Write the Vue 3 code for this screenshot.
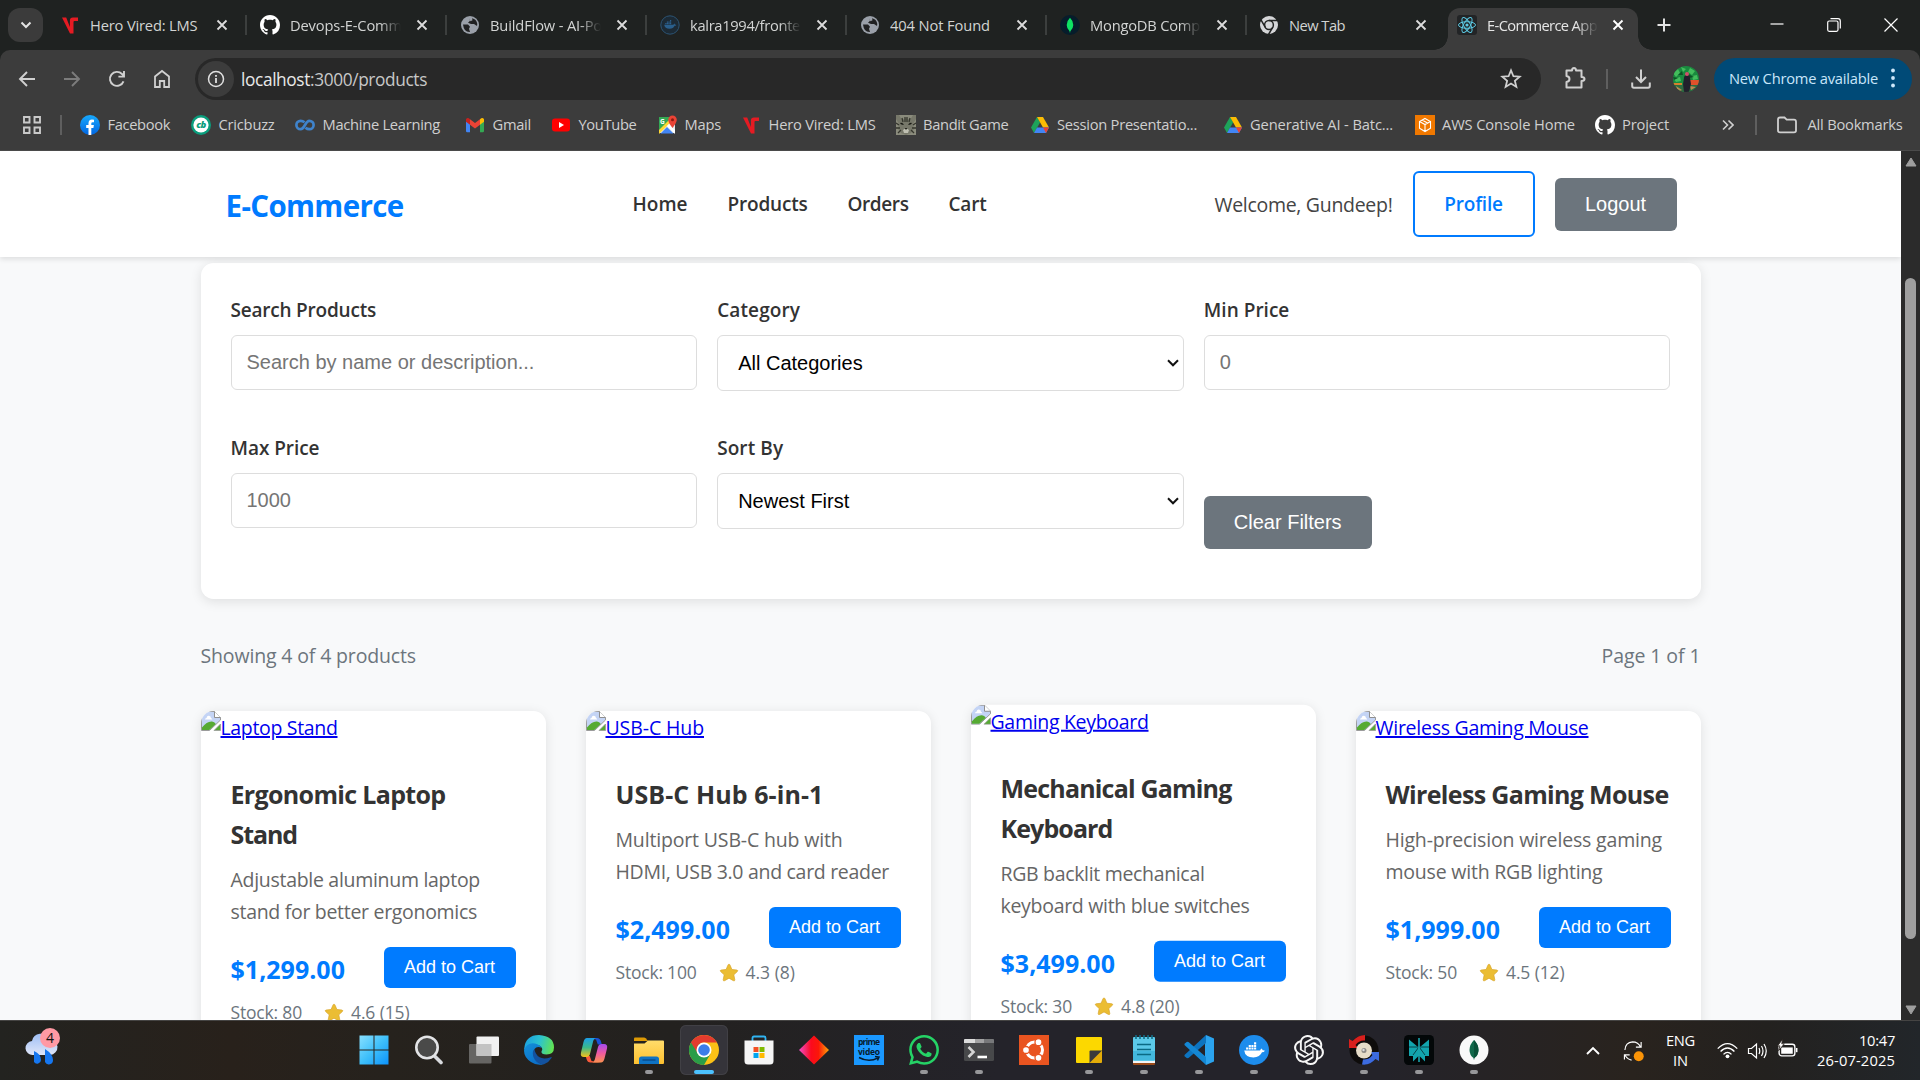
<script setup>
const vFit = {
  mounted(el, { value }) {
    if (!value) return
    const width = el.getBoundingClientRect().width
    el.style.letterSpacing = `${(value - width) / el.textContent.length}px`
  },
}

const v = `<svg viewBox="0 0 20 20"><path d="M2 2.500h4.200l3.700 9.500V5.500q0-3 3-3H18V6h-3.500q-1 0-1 1v11.500H10Z" fill="#e51b23"/></svg>`
const github = `<svg viewBox="0 0 16 16"><path fill="#fff" d="M8 0C3.58 0 0 3.58 0 8c0 3.54 2.29 6.53 5.47 7.59.4.07.55-.17.55-.38 0-.19-.01-.82-.01-1.49-2.01.37-2.53-.49-2.69-.94-.09-.23-.48-.94-.82-1.13-.28-.15-.68-.52-.01-.53.63-.01 1.08.58 1.23.82.72 1.21 1.87.87 2.33.66.07-.52.28-.87.51-1.07-1.78-.2-3.64-.89-3.64-3.95 0-.87.31-1.59.82-2.15-.08-.2-.36-1.02.08-2.12 0 0 .67-.21 2.2.82.64-.18 1.32-.27 2-.27.68 0 1.36.09 2 .27 1.53-1.04 2.2-.82 2.2-.82.44 1.1.16 1.92.08 2.12.51.56.82 1.27.82 2.15 0 3.07-1.87 3.75-3.65 3.95.29.25.54.73.54 1.48 0 1.07-.01 1.93-.01 2.2 0 .21.15.46.55.38A8.013 8.013 0 0016 8c0-4.42-3.58-8-8-8z"/></svg>`
const globe = `<svg viewBox="0 0 20 20"><circle cx="10" cy="10" r="9" fill="#9aa0a9"/><path d="M3 9.500h5l2 2.200-1 2 1 3.300q-6 .5-7-7.500ZM9 3.200l1 2.500-2 2 3 1.300h3l3 2 .3-2Q16.500 4 12 3.200l.5 2-2 1Z" fill="#202122"/></svg>`
const whale = `<path d="M3.500 12.500h17.200q.5-1.800 2-2.200l.8 2q1.600-.2 2.500.5-1 1.700-3.200 1.700-2.200 5.500-9.300 5.500-9 0-10-7.500Z"/><path d="M5.500 9.200h2.300v2.300H5.500zM8.400 9.200h2.300v2.300H8.400zM11.300 9.200h2.300v2.300h-2.300zM14.200 9.200h2.300v2.300h-2.300zM8.400 6.400h2.300v2.300H8.400zM11.300 6.400h2.300v2.300h-2.300zM14.200 6.400h2.300v2.300h-2.300zM14.200 3.600h2.300v2.300h-2.300z"/>`
const dockerDim = `<svg viewBox="0 0 20 20"><circle cx="10" cy="10" r="9.200" fill="#1c2a35" stroke="#2c5474" stroke-width="1"/><g fill="#2a5f8c" transform="translate(2.300 3) scale(.54)">${whale}</g></svg>`
const mongoDark = `<svg viewBox="0 0 20 20"><circle cx="10" cy="10" r="10" fill="#061d2b"/><path d="M10 2.800q3.300 3.200 3.300 7.200 0 3.700-3 6.200l-.1 1.300h-.5l-.1-1.300Q6.700 13.700 6.700 10q0-4 3.300-7.200Z" fill="#0ee264"/></svg>`
const chromeGrey = `<svg viewBox="0 0 20 20"><circle cx="10" cy="10" r="9" fill="#d5d6d8"/><g fill="none" stroke="#222423" stroke-width="1.500"><circle cx="10" cy="10" r="4.400"/><path d="M10 5.600h8.500M6.200 12.200 2 4.900M13.800 12.200l-4.300 7.300"/></g></svg>`
const react = `<svg viewBox="0 0 20 20"><rect width="20" height="20" rx="3" fill="#222426"/><g fill="none" stroke="#5cc9e3" stroke-width="1"><ellipse cx="10" cy="10" rx="8.500" ry="3.300"/><ellipse cx="10" cy="10" rx="8.500" ry="3.300" transform="rotate(60 10 10)"/><ellipse cx="10" cy="10" rx="8.500" ry="3.300" transform="rotate(120 10 10)"/></g><circle cx="10" cy="10" r="1.600" fill="#5cc9e3"/></svg>`

const tabs = [
  { icon: v, title: 'Hero Vired: LMS', w: 107.500 },
  { icon: github, title: 'Devops-E-Comm', w: 112, fade: true },
  { icon: globe, title: 'BuildFlow - AI-Po', w: 112, fade: true },
  { icon: dockerDim, title: 'kalra1994/fronte', w: 110, fade: true },
  { icon: globe, title: '404 Not Found', w: 100 },
  { icon: mongoDark, title: 'MongoDB Comp', w: 110, fade: true },
  { icon: chromeGrey, title: 'New Tab', w: 56 },
]

const facebook = `<svg viewBox="0 0 20 20"><defs><linearGradient id="fbg" x1="0" y1="0" x2="0" y2="1"><stop offset="0" stop-color="#17a9fd"/><stop offset="1" stop-color="#0165e1"/></linearGradient></defs><circle cx="10" cy="10" r="10" fill="url(#fbg)"/><path d="M8.500 20v-7H6.200v-3h2.300V8.300q0-3.800 3.500-3.800l2 .2v2.500h-1.300q-1.400 0-1.400 1.400V10h2.600l-.5 3h-2.100v7Z" fill="#fff"/></svg>`
const cricbuzz = `<svg viewBox="0 0 20 20"><circle cx="10" cy="10" r="10" fill="#0a9e7d"/><circle cx="10" cy="10" r="7.600" fill="#fff"/><text x="10" y="13.300" text-anchor="middle" font-family="Open Sans, sans-serif" font-size="9.500" font-weight="800" font-style="italic" letter-spacing="-.6" fill="#0a9e7d">cb</text></svg>`
const coursera = `<svg viewBox="0 0 20 20"><g fill="none" stroke="#3f83cb" stroke-width="2.700"><path d="M9.500 7.300Q7.800 5.800 5.600 5.800a4.200 4.200 0 0 0 0 8.400c4.300 0 4.500-8.400 8.800-8.400a4.200 4.200 0 0 1 0 8.400q-2.200 0-3.900-1.500"/></g></svg>`
const gmail = `<svg viewBox="0 0 20 20"><path d="M1 5v11q0 1.200 1.200 1.200H5V8Z" fill="#4285f4"/><path d="M15 8v9.200h2.800Q19 17.200 19 16V5Z" fill="#34a853"/><path d="M5 4.300v5.500l5 3.800 5-3.800V4.300l-5 3.800Z" fill="#ea4335"/><path d="M1 5v1.800l4 3V4.300Q2.500 2 1 4.200Z" fill="#c5221f"/><path d="M19 5v1.800l-4 3V4.300Q17.500 2 19 4.200Z" fill="#fbbc04"/></svg>`
const youtube = `<svg viewBox="0 0 20 20"><rect x="1" y="3.500" width="18" height="13" rx="3" fill="#f00"/><path d="m8 7 5 3-5 3Z" fill="#fff"/></svg>`
const maps = `<svg viewBox="0 0 20 20"><path d="M2 2h16v16H2Z" fill="#34a853"/><path d="M2 18 18 2v16Z" fill="#e8eaec"/><path d="M3.500 18.500 10 12l6.500 6.500Z" fill="#4285f4"/><path d="M2 15 12 5l2 2L2 19Z" fill="#fdd835"/><path d="m12 9 6 6v4l-8-8Z" fill="#fff"/><path d="M15.500 13Q11.200 7.500 11.200 4.800a4.300 4.300 0 0 1 8.600 0q0 2.700-4.300 8.200Z" fill="#ea4335"/><circle cx="15.500" cy="4.800" r="1.500" fill="#8c1a10"/><text x="3" y="9" font-size="6.500" font-weight="700" font-family="Open Sans, sans-serif" fill="#fff">G</text></svg>`
const cat = `<svg viewBox="0 0 20 20"><rect width="20" height="20" fill="#8a8b7c"/><path d="M0 0h3l3 5 4-2 4 2 3-5h3v4l-3 5 1 5-3 4-5 2-5-2-3-4 1-5-3-5Z" fill="#77786a"/><path d="M6 3l1 4M9 2v5M11 2v5M14 3l-1 4M0 8l3 2M20 8l-3 2M0 13h4M20 13h-4M2 18l3-3M18 18l-3-3" stroke="#35362d" stroke-width="1.300"/><path d="M4 8q2-1 4 1.500-3 1-4-1.500Zm12 0q-2-1-4 1.500 3 1 4-1.500ZM8.800 13h2.400L10 15Z" fill="#171812"/><path d="M7 15l3-2 3 2-1 3H8Z" fill="#c0c0b2"/><path d="M8.800 13h2.400L10 15Z" fill="#171812"/></svg>`
const drive = `<svg viewBox="0 0 20 20"><path d="M7 2 1 12.500 4 18l6.200-10.700Z" fill="#1da35a"/><path d="M7 2h6l6 10.500h-6Z" fill="#fbbc04"/><path d="M7 12.500h12L16 18H4Z" fill="#4285f4"/><path d="M13 12.500h6L16 18Z" fill="#ea4335"/></svg>`
const aws = `<svg viewBox="0 0 20 20"><rect width="20" height="20" fill="#f07800"/><path d="m10 3.500 5.500 3v6.800L10 16.500l-5.500-3.200V6.500Zm-5.500 3L10 9.500l5.500-3M10 9.500v7M7 5l5.500 3" fill="none" stroke="#fff" stroke-width="1.100"/></svg>`

const bookmarks = [
  { icon: facebook, title: 'Facebook', w: 62.500, slot: 111 },
  { icon: cricbuzz, title: 'Cricbuzz', w: 56, slot: 104 },
  { icon: coursera, title: 'Machine Learning', w: 117.500, slot: 170 },
  { icon: gmail, title: 'Gmail', w: 38.500, slot: 86 },
  { icon: youtube, title: 'YouTube', w: 58, slot: 106 },
  { icon: maps, title: 'Maps', w: 36.500, slot: 84 },
  { icon: v, title: 'Hero Vired: LMS', w: 107, slot: 154.500 },
  { icon: cat, title: 'Bandit Game', w: 85.500, slot: 134 },
  { icon: drive, title: 'Session Presentatio...', w: 140, slot: 193 },
  { icon: drive, title: 'Generative AI - Batc...', w: 143, slot: 192 },
  { icon: aws, title: 'AWS Console Home', w: 133, slot: 180 },
  { icon: github, title: 'Project', w: 47, slot: 123 },
]

const nav = [
  { label: 'Home', w: 55 },
  { label: 'Products', w: 80 },
  { label: 'Orders', w: 61 },
  { label: 'Cart', w: 38 },
]

const fields = [
  { label: 'Search Products', w: 145.500, placeholder: 'Search by name or description...' },
  { label: 'Category', w: 83, select: 'All Categories' },
  { label: 'Min Price', w: 85.500, placeholder: '0' },
  { label: 'Max Price', w: 89, placeholder: '1000' },
  { label: 'Sort By', w: 66, select: 'Newest First' },
]

const products = [
  {
    alt: 'Laptop Stand', altW: 117,
    name: [['Ergonomic Laptop', 215], ['Stand', 66.500]],
    desc: [['Adjustable aluminum laptop', 249.500], ['stand for better ergonomics', 246.500]],
    price: '$1,299.00', stock: 'Stock: 80', stockW: 71.500, rating: '4.6 (15)', ratingW: 58.500,
  },
  {
    alt: 'USB-C Hub', altW: 98.500,
    name: [['USB-C Hub 6-in-1', 208]],
    desc: [['Multiport USB-C hub with', 227], ['HDMI, USB 3.0 and card reader', 273.500]],
    price: '$2,499.00', stock: 'Stock: 100', stockW: 81, rating: '4.3 (8)', ratingW: 49.500,
  },
  {
    alt: 'Gaming Keyboard', altW: 158,
    name: [['Mechanical Gaming', 231], ['Keyboard', 112]],
    desc: [['RGB backlit mechanical', 204], ['keyboard with blue switches', 249]],
    price: '$3,499.00', stock: 'Stock: 30', stockW: 71.500, rating: '4.8 (20)', ratingW: 58.500, hover: true,
  },
  {
    alt: 'Wireless Gaming Mouse', altW: 213,
    name: [['Wireless Gaming Mouse', 283]],
    desc: [['High-precision wireless gaming', 276.500], ['mouse with RGB lighting', 217]],
    price: '$1,999.00', stock: 'Stock: 50', stockW: 71.500, rating: '4.5 (12)', ratingW: 58.500,
  },
]

const apps = [
  { name: 'start', svg: `<svg viewBox="0 0 30 30"><defs><linearGradient id="win" gradientUnits="userSpaceOnUse" x1="0" y1="0" x2="30" y2="30"><stop offset="0" stop-color="#8be1ff"/><stop offset=".5" stop-color="#3fc0fb"/><stop offset="1" stop-color="#0a91fb"/></linearGradient></defs><path d="M.5.500h14v14H.5zM15.500.500h14v14h-14zM.5 15.500h14v14H.5zM15.500 15.500h14v14h-14z" fill="url(#win)"/></svg>` },
  { name: 'search', svg: `<svg viewBox="0 0 30 30"><path d="m19.500 20 7.500 7.500" stroke="#d9dbde" stroke-width="3.600" stroke-linecap="round"/><circle cx="13" cy="12.500" r="10.700" fill="#4a4a49" stroke="#e3e4e6" stroke-width="2.600"/></svg>` },
  { name: 'taskview', svg: `<svg viewBox="0 0 30 30"><rect y="9" width="22.500" height="19.500" rx="1" fill="#666563"/><rect x="7.500" y="1.500" width="22.500" height="19.500" rx="1" fill="#f1f1f1"/><path d="M7.500 9h15v12h-15z" fill="#c3c3c3"/></svg>` },
  { name: 'edge', svg: `<svg viewBox="0 0 30 30"><defs><linearGradient id="e1" x1="0" y1=".3" x2="1" y2=".5"><stop offset="0" stop-color="#1b9fe0"/><stop offset=".5" stop-color="#2cc3d0"/><stop offset="1" stop-color="#62e352"/></linearGradient><linearGradient id="e2" x1="0" y1="0" x2=".6" y2="1"><stop offset="0" stop-color="#1390da"/><stop offset="1" stop-color="#0c6fc8"/></linearGradient></defs><path d="M.2 13.500Q1.500 0 15 0q15 1 15 12.500 0 7-7.500 7-5.500 0-5-3.300 1.300-1.400.5-3.200Q16.500 10 12 10 4 10 .2 15Z" fill="url(#e1)"/><path d="M.1 15Q3 7 11 8.500q5 1 7 4.500-5-2.500-7.500 1-3 5 1.500 11 3 3.500 7 4.400Q13 31 7 27-.5 22 .1 15Z" fill="url(#e2)"/><path d="M10.300 14Q7 19 11 25q4 5 9 4.300 5-2 7.500-6.300.6-1.300-.7-.8-10.500 3.500-14.500-3.200-1.500-2.500-2-5Z" fill="#13529f"/></svg>` },
  { name: 'copilot', svg: `<svg viewBox="0 0 30 30"><defs><linearGradient id="c1" x1="0" y1="0" x2="0" y2="1"><stop offset="0" stop-color="#1b9de8"/><stop offset=".5" stop-color="#3bb98a"/><stop offset="1" stop-color="#f6c21a"/></linearGradient><linearGradient id="c2" x1="0" y1="0" x2="0" y2="1"><stop offset="0" stop-color="#a34af0"/><stop offset=".5" stop-color="#ef5aa0"/><stop offset="1" stop-color="#fb9150"/></linearGradient></defs><path d="M7.500 3H18q3 0 4 3.500l.8 3h-4L17 4.500Z" fill="#1a51d6"/><path d="M22 27.500H11.500q-3 0-4-3.500l-.8-3h4l1.800 5Z" fill="#fa5a3c"/><path d="M8 3h9q-2 0-2.800 3L11 19q-.8 3-3.500 3H5q-4 0-3-4.500L4.500 7Q5.500 3 8 3Z" fill="url(#c1)"/><path d="M22 27.500h-9q2 0 2.800-3l3.200-12.500q.8-3 3.500-3H25q4 0 3 4.500l-2.500 10q-1 4-3.500 4Z" fill="url(#c2)"/></svg>` },
  { name: 'explorer', run: true, svg: `<svg viewBox="0 0 30 30"><defs><linearGradient id="fo" x1="0" y1="0" x2="0" y2="1"><stop offset="0" stop-color="#ffdc6b"/><stop offset="1" stop-color="#fdc02f"/></linearGradient></defs><path d="M0 3.500q0-1 1-1h9q1 0 1.700.8L14 6H0Z" fill="#dd9a05"/><path d="M0 8.500h10.500L14 5.500h15q1 0 1 1V28q0 1-1 1H0Z" fill="url(#fo)"/><path d="M5 29v-5q0-2.500 2.500-2.500h15Q25 21.500 25 24v5Z" fill="#0f73c4"/><path d="M8.500 25h13" stroke="#09498a" stroke-width="1.400"/></svg>` },
  { name: 'chrome', active: true, svg: `<svg viewBox="0 0 30 30"><circle cx="15" cy="15" r="15" fill="#fbc116"/><path d="M2 7.500A15 15 0 0 0 15 30l6.500-11.200L15 15 8 5Z" fill="#2a9d48"/><path d="M2 7.500A15 15 0 0 1 15 0a15 15 0 0 1 13 7.500H15q-5 0-6.500 4.300L8.500 18Z" fill="#e33b2e"/><circle cx="15" cy="15" r="7.500" fill="#fff"/><circle cx="15" cy="15" r="5.800" fill="#3b7de9"/></svg>` },
  { name: 'store', svg: `<svg viewBox="0 0 30 30"><path d="M8.500 7V3q0-1.500 1.500-1.500h10q1.500 0 1.500 1.500v4" fill="none" stroke="#30b4f2" stroke-width="1.800"/><path d="M.5 5.500h29V26q0 3.500-3.500 3.500H4Q.5 29.500.5 26Z" fill="#f5f5f5"/><path d="M9.500 12h5v5h-5z" fill="#f25022"/><path d="M15.500 12h5v5h-5z" fill="#7fba00"/><path d="M9.500 18h5v5h-5z" fill="#00a4ef"/><path d="M15.500 18h5v5h-5z" fill="#ffb900"/></svg>` },
  { name: 'diamond', svg: `<svg viewBox="0 0 30 30"><defs><linearGradient id="di"><stop offset="0" stop-color="#f04fc9"/><stop offset=".4" stop-color="#fb0a1e"/><stop offset=".65" stop-color="#fb1708"/><stop offset="1" stop-color="#fda50a"/></linearGradient></defs><path d="m15 .5 15 14.500-15 14.500L0 15Z" fill="url(#di)"/></svg>` },
  { name: 'prime', svg: `<svg viewBox="0 0 30 30"><rect width="30" height="30" fill="#1a98ff"/><g font-family="Open Sans, sans-serif" font-weight="700" font-size="8.500" fill="#061b2e" text-anchor="middle"><text x="15" y="10" textLength="22">prime</text><text x="15" y="19.500" textLength="22">video</text></g><path d="M5 22.500q10 5.500 19 .3M21 21.500l4 .5-1.500 3.500" stroke="#061b2e" stroke-width="1.500" fill="none"/></svg>` },
  { name: 'whatsapp', run: true, svg: `<svg viewBox="0 0 24 24"><path fill="#25d366" d="M17.472 14.382c-.297-.149-1.758-.867-2.030-.967-.273-.099-.471-.148-.67.150-.197.297-.767.966-.940 1.164-.173.199-.347.223-.644.075-.297-.150-1.255-.463-2.390-1.475-.883-.788-1.480-1.761-1.653-2.059-.173-.297-.018-.458.130-.606.134-.133.298-.347.446-.520.149-.174.198-.298.298-.497.099-.198.050-.371-.025-.520-.075-.149-.669-1.612-.916-2.207-.242-.579-.487-.500-.669-.510-.173-.008-.371-.010-.570-.010-.198 0-.520.074-.792.372-.272.297-1.040 1.016-1.040 2.479 0 1.462 1.065 2.875 1.213 3.074.149.198 2.096 3.200 5.077 4.487.709.306 1.262.489 1.694.625.712.227 1.360.195 1.871.118.571-.085 1.758-.719 2.006-1.413.248-.694.248-1.289.173-1.413-.074-.124-.272-.198-.570-.347m-5.421 7.403h-.004a9.870 9.870 0 0 1-5.031-1.378l-.361-.214-3.741.982.998-3.648-.235-.374a9.860 9.860 0 0 1-1.510-5.260c.001-5.450 4.436-9.884 9.888-9.884 2.640 0 5.122 1.030 6.988 2.898a9.825 9.825 0 0 1 2.893 6.994c-.003 5.450-4.437 9.884-9.885 9.884m8.413-18.297A11.815 11.815 0 0 0 12.050 0C5.495 0 .160 5.335.157 11.892c0 2.096.547 4.142 1.588 5.945L.057 24l6.305-1.654a11.882 11.882 0 0 0 5.683 1.448h.005c6.554 0 11.890-5.335 11.893-11.893a11.821 11.821 0 0 0-3.480-8.413z"/></svg>` },
  { name: 'terminal', run: true, svg: `<svg viewBox="0 0 30 30"><rect y="4" width="30" height="22" rx="1.500" fill="#47484a"/><path d="M1 4h10v4H0V5q0-1 1-1Z" fill="#dcdcdc"/><path d="M11 4h9v4h-9z" fill="#a2a2a3"/><path d="M20 4h9q1 0 1 1v3H20z" fill="#77787a"/><path d="m4.500 12 5 5-5 5" fill="none" stroke="#d4d4d4" stroke-width="2.600"/><path d="M13.500 22H23" stroke="#fff" stroke-width="2.600"/></svg>` },
  { name: 'ubuntu', svg: `<svg viewBox="0 0 30 30"><rect width="30" height="30" fill="#e95420"/><circle cx="15.500" cy="15" r="8" fill="none" stroke="#fff" stroke-width="3"/><g fill="#fff" stroke="#e95420" stroke-width="1.300"><circle cx="7" cy="15" r="3.500"/><circle cx="19.500" cy="7.200" r="3.500"/><circle cx="19.500" cy="22.800" r="3.500"/></g></svg>` },
  { name: 'notes', run: true, svg: `<svg viewBox="0 0 30 30"><path d="M2 3q0-1 1-1h24q1 0 1 1v13L16 28H3q-1 0-1-1Z" fill="#fcd800"/><path d="M28 15.500V27q0 1-1 1H15.500V16.500q0-1 1-1Z" fill="#3a3a3c"/><path d="M28 15.500 15.500 28h11.500q1 0 1-1Z" fill="#e4ac08"/></svg>` },
  { name: 'notepad', run: true, svg: `<svg viewBox="0 0 30 30"><rect x="4" y="24" width="22" height="6" rx="1" fill="#9a4a18"/><path d="M4 24h22v4H4z" fill="#f4f4f4"/><rect x="4" y="2" width="22" height="24" rx="1" fill="#5cc9e8"/><path d="M4 16h22v9H4z" fill="#43b8dd"/><path d="M8 9.500h14M8 14.500h14M8 19.500h14" stroke="#0b6a84" stroke-width="1.500"/><path d="M7 0v4M11 0v4M15 0v4M19 0v4M23 0v4" stroke="#126d85" stroke-width="1.600"/></svg>` },
  { name: 'vscode', run: true, svg: `<svg viewBox="0 0 30 30"><path d="m22 0 8 3.500v23L22 30l-1-7V7Z" fill="#2ba3ee"/><path d="M22 0v8L4.500 23 3 23.200.5 21.300V20Z" fill="#0d74c0"/><path d="M22 30v-8L4.500 7 3 6.800.5 8.700V10Z" fill="#1487d4"/></svg>` },
  { name: 'docker', run: true, svg: `<svg viewBox="0 0 30 30"><circle cx="15" cy="15" r="15" fill="#1d8cec"/><g fill="#fff" transform="translate(2 4) scale(.92)">${whale}</g></svg>` },
  { name: 'chatgpt', run: true, svg: `<svg viewBox="0 0 24 24"><path fill="#f6f6f6" d="M22.2819 9.8211a5.9847 5.9847 0 0 0-.5157-4.9108 6.0462 6.0462 0 0 0-6.5098-2.9A6.0651 6.0651 0 0 0 4.9807 4.1818a5.9847 5.9847 0 0 0-3.9977 2.9 6.0462 6.0462 0 0 0 .7427 7.0966 5.98 5.98 0 0 0 .511 4.9107 6.051 6.051 0 0 0 6.5146 2.9001A5.9847 5.9847 0 0 0 13.2599 24a6.0557 6.0557 0 0 0 5.7718-4.2058 5.9894 5.9894 0 0 0 3.9977-2.9001 6.0557 6.0557 0 0 0-.7475-7.0729zm-9.022 12.6081a4.4755 4.4755 0 0 1-2.8764-1.0408l.1419-.0804 4.7783-2.7582a.7948.7948 0 0 0 .3927-.6813v-6.7369l2.02 1.1686a.071.071 0 0 1 .038.052v5.5826a4.504 4.504 0 0 1-4.4945 4.4944zm-9.6607-4.1254a4.4708 4.4708 0 0 1-.5346-3.0137l.142.0852 4.783 2.7582a.7712.7712 0 0 0 .7806 0l5.8428-3.3685v2.3324a.0804.0804 0 0 1-.0332.0615L9.74 19.9502a4.4992 4.4992 0 0 1-6.1408-1.6464zM2.3408 7.8956a4.485 4.485 0 0 1 2.3655-1.9728V11.6a.7664.7664 0 0 0 .3879.6765l5.8144 3.3543-2.0201 1.1685a.0757.0757 0 0 1-.071 0l-4.8303-2.7865A4.504 4.504 0 0 1 2.3408 7.872zm16.5963 3.8558L13.1038 8.364 15.1192 7.2a.0757.0757 0 0 1 .071 0l4.8303 2.7913a4.4944 4.4944 0 0 1-.6765 8.1042v-5.6772a.79.79 0 0 0-.407-.667zm2.0107-3.0231l-.142-.0852-4.7735-2.7818a.7759.7759 0 0 0-.7854 0L9.409 9.2297V6.8974a.0662.0662 0 0 1 .0284-.0615l4.8303-2.7866a4.4992 4.4992 0 0 1 6.6802 4.66zM8.3065 12.863l-2.02-1.1638a.0804.0804 0 0 1-.038-.0567V6.0742a4.4992 4.4992 0 0 1 7.3757-3.4537l-.142.0805L8.704 5.459a.7948.7948 0 0 0-.3927.6813zm1.0976-2.3654l2.602-1.4998 2.6069 1.4998v2.9994l-2.5974 1.4997-2.6067-1.4997Z"/></svg>` },
  { name: 'sync', run: true, svg: `<svg viewBox="0 0 30 30"><circle cx="15" cy="15" r="14.500" fill="#0e0c0b"/><path d="M0 4v9h9L6.500 10Q10 5 16 5.500V0Q9 0 3.500 6Z" fill="#d8201d"/><path d="M30 26v-9h-9l2.500 3q-3 4.500-9.500 4.500l-1 5q8 1 13.500-5.500Z" fill="#3c6be0"/><circle cx="15" cy="15.500" r="8" fill="#e6dcc8"/><circle cx="15" cy="15.500" r="2.500" fill="#8d8a86"/><circle cx="14.500" cy="15" r="1.200" fill="#dedede"/></svg>` },
  { name: 'perplexity', run: true, svg: `<svg viewBox="0 0 30 30"><rect width="30" height="30" rx="4.500" fill="#030708"/><path d="m5 4.500 9 7.500h2l9-7.500V21l-4 0v5.500L15.500 21h-1L9 26.500V21H5Z" fill="#12a5ae"/><path d="M15 3v24M5 12h20M9 20l5.500-7.500M21 20l-5.500-7.500" stroke="#06444b" stroke-width="1"/><path d="M15 3v24" stroke="#20c5cf" stroke-width="1.200"/></svg>` },
  { name: 'mongodb', run: true, svg: `<svg viewBox="0 0 30 30"><circle cx="15" cy="15" r="14.500" fill="#f9f9f9"/><path d="M15 5q4.500 4.500 4.500 10 0 5-4 8l-.2 1.500h-.6l-.2-1.500q-4-3-4-8Q10.500 9.500 15 5Z" fill="#11694b"/><path d="M15 5q4.500 4.500 4.500 10 0 5-4.500 8Z" fill="#0a5239"/></svg>` },
]
</script>

<template>
  <div class="screen">
    <header class="tabstrip">
      <button class="tab-search" aria-label="Search tabs">
        <svg viewBox="0 0 12 12" width="12" height="12"><path d="m1.500 3.500 4.500 4.500 4.500-4.500" fill="none" stroke="#e3e3e3" stroke-width="2" /></svg>
      </button>
      <div v-for="(t, i) in tabs" :key="t.title" class="tab" :class="{ last: i === tabs.length - 1 }">
        <span class="icon" v-html="t.icon"></span>
        <span class="tab-title" :class="{ fade: t.fade }"><span v-fit="t.w" class="txt">{{ t.title }}</span></span>
        <svg class="x" viewBox="0 0 12 12"><path d="m1.500 1.500 9 9m0-9-9 9" stroke="#dcdcdc" stroke-width="1.800" /></svg>
      </div>
      <div class="tab active">
        <span class="icon" v-html="react"></span>
        <span class="tab-title fade"><span v-fit="110" class="txt">E-Commerce App</span></span>
        <svg class="x" viewBox="0 0 12 12"><path d="m1.500 1.500 9 9m0-9-9 9" stroke="#fff" stroke-width="1.900" /></svg>
      </div>
      <svg class="plus" viewBox="0 0 14 14"><path d="M7 .5v13M.5 7h13" stroke="#e3e3e3" stroke-width="2" /></svg>
      <div class="window-buttons">
        <svg viewBox="0 0 14 14"><path d="M.5 6h13" stroke="#fff" stroke-width="1.200" /></svg>
        <svg viewBox="0 0 14 14"><rect x=".7" y="3" width="10.300" height="10.300" rx="1.500" fill="none" stroke="#fff" stroke-width="1.200" /><path d="M3.500.700H11Q13.300.700 13.300 3v7.500" fill="none" stroke="#fff" stroke-width="1.200" /></svg>
        <svg viewBox="0 0 14 14"><path d="m.5.500 13 13m0-13-13 13" stroke="#fff" stroke-width="1.200" /></svg>
      </div>
    </header>

    <div class="chrome">
      <div class="toolbar">
        <div class="nav-buttons">
          <svg viewBox="0 0 20 20"><path d="M18 10H3m7-7-7 7 7 7" fill="none" stroke="#d0d0d0" stroke-width="1.900" /></svg>
          <svg viewBox="0 0 20 20"><path d="M2 10h15m-7-7 7 7-7 7" fill="none" stroke="#7c7c7c" stroke-width="1.900" /></svg>
          <svg viewBox="0 0 20 20"><path d="M16.500 12.300A7 7 0 1 1 15 5l2 2.200M17 2v5.600h-5.600" fill="none" stroke="#d0d0d0" stroke-width="1.900" /></svg>
          <svg viewBox="0 0 20 20"><path d="M3 18V7.500L10 2l7 5.500V18h-4.800v-6H7.800v6Z" fill="none" stroke="#d0d0d0" stroke-width="1.800" /></svg>
        </div>
        <div class="omnibox">
          <span class="info"><svg viewBox="0 0 18 18" width="18" height="18"><circle cx="9" cy="9" r="7.500" fill="none" stroke="#e0e0e0" stroke-width="1.500" /><path d="M9 8v5M9 5v1.800" stroke="#e0e0e0" stroke-width="1.800" /></svg></span>
          <span v-fit="186" class="txt url">localhost<span class="path">:3000/products</span></span>
          <svg class="star" viewBox="0 0 20 20"><path d="m10 2.200 2.200 5.300 5.700.4-4.400 3.700 1.400 5.600-4.900-3-4.900 3 1.400-5.600L2.100 7.900l5.700-.4Z" fill="none" stroke="#d0d0d0" stroke-width="1.600" /></svg>
        </div>
        <svg class="puzzle" viewBox="0 0 22 24"><path d="M2.500 4.500H8Q8 2 10 2t2 2.500h5.500V11Q20.500 11 20.500 13t-3 2v6.500H2.500V16q3-.5 3-3t-3-3Z" fill="none" stroke="#d0d0d0" stroke-width="2" stroke-linejoin="round" /></svg>
        <i class="sep"></i>
        <svg class="download" viewBox="0 0 20 20"><path d="M10 .500v12M5 8l5 5 5-5M1.200 13.500V17q0 1.700 1.700 1.700h14.200q1.700 0 1.700-1.700v-3.500" fill="none" stroke="#d0d0d0" stroke-width="2" /></svg>
        <svg class="avatar" viewBox="0 0 26 26"><defs><clipPath id="av"><circle cx="13" cy="13" r="13" /></clipPath></defs><g clip-path="url(#av)"><path d="M0 0h26v26H0z" fill="#1a8a3f" /><path d="m0 7 5-4 2 4-4 4Zm8-6 5 2-3 3Zm9 1 5 3-3 4-4-3ZM1 13l6-2 1 4-5 1Zm18-3 5-1 1 4-5 1Z" fill="#43bd5c" /><path d="m5 9 4-4 1 4Zm9-3 3 3 4 2-5 1ZM0 11l5 1-4 2Z" fill="#0d5226" /><path d="M0 17h9v2H0z" fill="#d8802e" /><path d="M17 14h9v5h-9z" fill="#e0512b" /><path d="M0 19h26v7H0z" fill="#2e6b41" /><path d="m3 20 6 4-4 2ZM17 20l6 1-5 3Z" fill="#b98a52" /><path d="M11 12q0-3 3-3t3 3l1 6-2 8h-5l-1-8Z" fill="#22202c" /><circle cx="14" cy="8" r="2" fill="#d0506c" /></g></svg>
        <button class="update"><span v-fit="149" class="txt">New Chrome available</span><svg viewBox="0 0 4 20" width="4" height="20"><g fill="#cfe8fb"><circle cx="2" cy="2.500" r="1.900" /><circle cx="2" cy="10" r="1.900" /><circle cx="2" cy="17.500" r="1.900" /></g></svg></button>
      </div>

      <div class="bookmarks">
        <svg class="grid-icon" viewBox="0 0 18 18"><path d="M1 1h5.500v5.500H1zM11.500 1H17v5.500h-5.500zM1 11.500h5.500V17H1zM11.500 11.500H17V17h-5.500z" fill="none" stroke="#c9c9c9" stroke-width="1.900" /></svg>
        <i class="sep"></i>
        <div v-for="b in bookmarks" :key="b.title" class="bookmark" :style="{ width: b.slot + 'px' }">
          <span class="icon" v-html="b.icon"></span>
          <span v-fit="b.w" class="txt">{{ b.title }}</span>
        </div>
        <svg class="more" viewBox="0 0 12 12"><path d="m1 1.500 4.500 4.500L1 10.500m5.500-9L11 6l-4.500 4.500" fill="none" stroke="#d0d0d0" stroke-width="1.600" /></svg>
        <i class="sep second"></i>
        <svg class="folder" viewBox="0 0 20 18"><path d="M1 14.500v-11Q1 1.500 3 1.500h4.500l2.200 2.200H17q2 0 2 2v8.800q0 1.800-2 1.800H3q-2 0-2-1.800Z" fill="none" stroke="#d0d0d0" stroke-width="1.800" /></svg>
        <span v-fit="95" class="txt">All Bookmarks</span>
      </div>
    </div>

    <div class="viewport">
      <div class="page">
        <nav class="navbar">
          <div class="navbar-inner">
            <a class="brand"><span v-fit="178" class="txt">E-Commerce</span></a>
            <div class="links">
              <a v-for="n in nav" :key="n.label"><span v-fit="n.w" class="txt">{{ n.label }}</span></a>
            </div>
            <div class="user">
              <span v-fit="178" class="txt welcome">Welcome, Gundeep!</span>
              <a class="btn outline"><span v-fit="58.500" class="txt">Profile</span></a>
              <button class="btn grey logout">Logout</button>
            </div>
          </div>
        </nav>

        <main class="container">
          <section class="filters">
            <div v-for="f in fields" :key="f.label" class="field">
              <label><span v-fit="f.w" class="txt">{{ f.label }}</span></label>
              <div v-if="f.select" class="select">
                {{ f.select }}
                <svg viewBox="0 0 12 8" width="12" height="8"><path d="m1 1.300 5 5 5-5" fill="none" stroke="#111" stroke-width="2" /></svg>
              </div>
              <input v-else type="text" :placeholder="f.placeholder" />
            </div>
            <div class="field end"><button class="btn grey">Clear Filters</button></div>
          </section>

          <div class="summary">
            <span v-fit="215.500" class="txt">Showing 4 of 4 products</span>
            <span v-fit="99" class="txt">Page 1 of 1</span>
          </div>

          <section class="products">
            <article v-for="p in products" :key="p.alt" class="card" :class="{ hover: p.hover }">
              <a class="picture">
                <svg viewBox="0 0 20 20" width="20" height="20"><path d="M.5.500h13l6 6V9L8.500 19.500H.5Z" fill="#c4d4f5" stroke="#9b9b9b" /><path d="M13.500.500v6h6" fill="#fff" stroke="#8f8f8f" /><path d="M4 8.500Q4 7 5.500 7q.5-2.500 2.500-2.200 2 .3 2 2.500 1.200 0 1.200 1.200Z" fill="#fff" /><path d="M1 19v-2.500Q6 10 11 10.500q2.500.3 3.800 2.500L8.300 19Z" fill="#56aa32" /><path d="M13 19.500 19.500 13v6.500Z" fill="#56aa32" stroke="#9b9b9b" stroke-width=".8" /></svg>
                <span v-fit="p.altW" class="txt">{{ p.alt }}</span>
              </a>
              <div class="info-block">
                <h3><span v-for="l in p.name" :key="l[0]" v-fit="l[1]" class="txt">{{ l[0] }}</span></h3>
                <p><span v-for="l in p.desc" :key="l[0]" v-fit="l[1]" class="txt">{{ l[0] }}</span></p>
                <div class="buy">
                  <span v-fit="114.500" class="txt price">{{ p.price }}</span>
                  <button class="add">Add to Cart</button>
                </div>
                <div class="meta">
                  <span v-fit="p.stockW" class="txt">{{ p.stock }}</span>
                  <svg class="gold" viewBox="0 0 20 20"><path d="M10 1.200q.7 0 1.100 1l1.800 4.300 4.900.5q1.700.4.500 1.600l-3.500 3.200 1 4.900q.1 1.600-1.400 1L10 15.200l-4.400 2.500q-1.500.6-1.400-1l1-4.900-3.500-3.200Q.5 7.400 2.200 7l4.900-.5 1.800-4.300q.4-1 1.100-1Z" fill="#ebbd33" stroke="#d9a52a" stroke-width=".7" /></svg>
                  <span v-fit="p.ratingW" class="txt">{{ p.rating }}</span>
                </div>
              </div>
            </article>
          </section>
        </main>
      </div>
      <div class="scrollbar">
        <svg viewBox="0 0 12 10" width="12" height="10"><path d="M6 1 11 9H1Z" fill="#9f9f9f" stroke="#9f9f9f" stroke-linejoin="round" /></svg>
        <div class="thumb"></div>
        <svg viewBox="0 0 12 10" width="12" height="10"><path d="M6 9 11 1H1Z" fill="#9f9f9f" stroke="#9f9f9f" stroke-linejoin="round" /></svg>
      </div>
    </div>

    <footer class="taskbar">
      <div class="weather">
        <svg viewBox="0 0 36 48" width="36" height="48"><defs><linearGradient id="cl" x1="0" y1="0" x2="0" y2="1"><stop offset="0" stop-color="#9fbff5" /><stop offset="1" stop-color="#dfe6f8" /></linearGradient></defs><path d="M9 34a7 7 0 0 1-1-14 9 9 0 0 1 17-2 8 8 0 0 1 1 16Z" fill="url(#cl)" /><path d="M10 30q7 3 7 9a3.800 3.800 0 0 1-7 2Zm11-2q8 5 8 11a4.200 4.200 0 0 1-8 2Z" fill="#1677f0" /></svg>
        <span class="badge">4</span>
      </div>
      <div class="apps">
        <div v-for="a in apps" :key="a.name" class="app" :class="{ run: a.run, active: a.active }">
          <span class="app-icon" v-html="a.svg"></span>
        </div>
      </div>
      <div class="tray">
        <svg class="caret" viewBox="0 0 14 9"><path d="m1 8 6-6 6 6" fill="none" stroke="#fff" stroke-width="1.900" /></svg>
        <svg class="refresh" viewBox="0 0 22 22"><path d="M2 10Q2.500 2 10 1.500q6 0 8.500 5.500M19 1.500V7h-5.500M1.500 20v-5H7M2 15.500q3 4.500 7 5" fill="none" stroke="#fff" stroke-width="1.200" /><circle cx="16.500" cy="16.500" r="5.200" fill="#fb9407" /></svg>
        <div class="lang"><span v-fit="29" class="txt">ENG</span><span v-fit="15" class="txt">IN</span></div>
        <svg class="wifi" viewBox="0 0 20 16"><g fill="none" stroke="#fff" stroke-width="1.300"><path d="M.7 6.200q9.300-9.500 18.600 0M3.400 9q6.600-6.800 13.200 0M6.200 11.700q3.800-3.800 7.600 0" /></g><circle cx="10" cy="13.500" r="1.800" fill="#fff" /></svg>
        <svg class="volume" viewBox="0 0 20 18"><g fill="none" stroke="#fff" stroke-width="1.200"><path d="M1 6.500h3L9 2v14l-5-4.500H1ZM11.500 6q1.500 3 0 6M14 4q3 5 0 10M16.500 2q4.500 7 0 14" /></g></svg>
        <svg class="battery" viewBox="0 0 20 18"><rect x="2" y="5" width="15" height="11" rx="2.500" fill="none" stroke="#fff" stroke-width="1.300" /><path d="M4 8h11v6H4z" fill="#fff" /><path d="M18 8.500h1.500v4H18z" fill="#fff" /><path d="M5.500 0 .5 6.500h2.300L1.500 11 7 4.500H4.500Z" fill="#fff" stroke="#28221e" stroke-width=".8" /></svg>
        <div class="clock"><span v-fit="36" class="txt">10:47</span><span v-fit="78" class="txt">26-07-2025</span></div>
      </div>
    </footer>
  </div>
</template>

<style>
body { overflow: hidden; background: #1f2221; }
</style>

<style scoped>
* { box-sizing: border-box; }
.screen { width: 1920px; height: 1080px; display: flex; flex-direction: column; overflow: hidden; background: #1f2221; font-family: "Open Sans", "Noto Sans", sans-serif; }
.txt { display: inline-block; white-space: nowrap; }
button { border: 0; margin: 0; padding: 0; font-family: inherit; }
.icon { width: 20px; height: 20px; flex: none; }
.icon :deep(svg), .app-icon :deep(svg) { display: block; width: 100%; height: 100%; }
.sep { width: 2px; height: 20px; background: #5f5f5f; flex: none; }

.tabstrip { height: 50px; flex: none; display: flex; align-items: center; padding-left: 8px; font-size: 14.700px; color: #d2d4d3; }
.tab-search { width: 35px; height: 34px; border-radius: 12px; background: #3b3b3b; display: flex; align-items: center; justify-content: center; margin-right: 17px; }
.tab { width: 200px; height: 40px; display: flex; align-items: center; position: relative; flex: none; }
.tab::after { content: ""; position: absolute; right: 13px; top: 10px; width: 2px; height: 20px; background: #3c3f3e; }
.tab.last { width: 198px; margin-left: -1px; }
.tab.last + .tab { margin-left: -9px; }
.tab.last::after, .tab.active::after { display: none; }
.tab-title { width: 112px; margin-left: 10px; padding-top: 1px; overflow: hidden; line-height: 22px; height: 24px; }
.tab-title.fade { -webkit-mask-image: linear-gradient(90deg, #000 80%, transparent 99%); mask-image: linear-gradient(90deg, #000 80%, transparent 99%); }
.x { width: 12px; height: 12px; margin-left: 14px; }
.tab.active { width: 190px; height: 42px; margin-top: 8px; padding: 0 0 8px 9px; background: #3c3c3c; border-radius: 12px 12px 0 0; color: #e6e6e6; }
.tab.active::before { content: ""; position: absolute; left: -14px; right: -14px; bottom: 0; height: 14px; background: radial-gradient(circle at 0 0, transparent 13.500px, #3c3c3c 14px) left / 14px 14px no-repeat, radial-gradient(circle at 100% 0, transparent 13.500px, #3c3c3c 14px) right / 14px 14px no-repeat; }
.tab.active .x { margin-left: 13px; }
.plus { width: 14px; height: 14px; margin-left: 19px; }
.window-buttons { margin-left: auto; display: flex; gap: 43px; padding-right: 22px; }
.window-buttons svg { width: 14px; height: 14px; }

.chrome { height: 101px; flex: none; background: #3c3c3c; border-radius: 10px 10px 0 0; border-bottom: 1px solid #4a4a4a; color: #cfcfcf; }
.toolbar { height: 58px; display: flex; align-items: center; padding-left: 17px; }
.nav-buttons { display: flex; gap: 25px; width: 178px; }
.nav-buttons svg { width: 20px; height: 20px; flex: none; }
.omnibox { width: 1346px; height: 42px; border-radius: 21px; background: #282828; display: flex; align-items: center; padding-left: 3px; flex: none; }
.info { width: 36px; height: 36px; border-radius: 50%; background: #3c3c3c; display: flex; align-items: center; justify-content: center; margin-right: 7px; }
.url { font-size: 17.300px; color: #e8e8e8; }
.url .path { color: #c7c7c7; }
.star { width: 22px; height: 22px; margin: 0 19px 0 auto; }
.puzzle { width: 22px; height: 24px; margin: -2px 20px 0 23px; }
.download { width: 20px; height: 20px; margin: 0 22px 0 23px; }
.avatar { width: 26px; height: 26px; margin-right: 15px; }
.update { width: 198px; height: 42px; border-radius: 21px; background: #004a77; color: #c8e6fa; font-size: 14.700px; display: flex; align-items: center; padding: 0 0 2px 15px; gap: 13px; }
.bookmarks { height: 34px; display: flex; align-items: center; font-size: 14.700px; padding-left: 23px; }
.bookmarks .txt { margin-top: -2px; }
.grid-icon { width: 18px; height: 18px; margin-right: 19px; }
.bookmarks .sep { margin-right: 18px; }
.bookmark { display: flex; align-items: center; gap: 7.500px; flex: none; }
.more { width: 12px; height: 12px; margin: 0 21px 0 4px; }
.bookmarks .sep.second { margin-right: 20px; }
.folder { width: 20px; height: 18px; margin-right: 11px; }

.viewport { height: 869px; flex: none; display: flex; overflow: hidden; }
.page { width: 1901px; background: #f8f9fa; overflow: hidden; line-height: 1.6; font-size: 19.500px; color: #333; }
.navbar { height: 106px; background: #fff; position: relative; z-index: 2; box-shadow: 0 2.500px 5px rgba(0, 0, 0, .1); }
.navbar-inner { width: 1500px; height: 106px; margin: 0 auto; padding: 0 24px 0 25px; display: flex; align-items: center; justify-content: space-between; }
.brand { font-size: 29.500px; font-weight: 700; color: #007bff; padding-top: 3px; }
.links { display: flex; gap: 40px; font-weight: 600; color: #333; font-size: 19px; margin-left: 1px; padding-top: 1px; }
.user { display: flex; align-items: center; gap: 20px; }
.welcome { color: #444; padding-top: 1px; }
.btn { border-radius: 6px; display: flex; align-items: center; justify-content: center; flex: none; }
.btn.outline { width: 122px; height: 66px; border: 2px solid #007bff; color: #007bff; font-weight: 600; font-size: 19px; padding-top: 1px; }
.btn.grey { height: 53px; padding: 1px 30px 0; background: #6c757d; color: #fff; font: 20px/23px "Liberation Sans", Arial, sans-serif; }
.btn.logout { width: 122px; }
.container { width: 1500px; margin: 5.700px auto 0; }
.filters { background: #fff; border-radius: 12.500px; padding: 30px; height: 336.500px; display: grid; grid-template-columns: repeat(3, 1fr); grid-auto-rows: 118px; gap: 20px; box-shadow: 0 2.500px 12px rgba(0, 0, 0, .1); }
.field label { display: block; height: 32px; margin-bottom: 10px; padding-top: 1px; font-weight: 600; font-size: 19px; line-height: 32px; }
.field input, .select { width: 100%; height: 55px; border: 1px solid #ddd; border-radius: 6px; padding: 0 15px; background: #fff; font: 20px "Liberation Sans", Arial, sans-serif; color: #000; display: block; }
.field input::placeholder { color: #757575; }
.select { height: 56px; display: flex; align-items: center; justify-content: space-between; padding: 1px 4px 0 20px; }
.field.end { display: flex; align-items: flex-end; }
.summary { margin-top: 40px; height: 32px; padding-top: 1px; line-height: 32px; display: flex; justify-content: space-between; color: #6c757d; }
.products { margin-top: 40px; display: grid; grid-template-columns: repeat(4, 345px); gap: 40px; }
.card { height: 360px; background: #fff; border-radius: 12.500px; overflow: hidden; box-shadow: 0 2.500px 12px rgba(0, 0, 0, .1); }
.card.hover { transform: translateY(-6.250px); }
.picture { display: flex; height: 33px; color: #0000ee; line-height: 34px; }
.picture svg { flex: none; }
.picture .txt { text-decoration: underline; text-decoration-thickness: 2px; }
.info-block { padding: 30px; }
h3 { margin: 0 0 10px; font-size: 25px; line-height: 40px; font-weight: 700; color: #333; display: flex; flex-direction: column; align-items: flex-start; }
p { margin: 0 0 19px; line-height: 32px; color: #666; display: flex; flex-direction: column; align-items: flex-start; }
.buy { display: flex; justify-content: space-between; align-items: center; height: 41px; margin-bottom: 10px; }
.price { font-size: 25px; font-weight: 700; color: #007bff; padding-top: 3px; }
.add { width: 132px; height: 41px; border-radius: 6px; background: #007bff; color: #fff; font: 18px "Liberation Sans", Arial, sans-serif; padding-bottom: 1px; }
.meta { display: flex; align-items: center; height: 29px; font-size: 17.500px; line-height: 29px; color: #6c757d; }
.gold { width: 20px; height: 20px; margin: 0 7px 0 22px; }
.scrollbar { width: 19px; background: #2b2b2b; display: flex; flex-direction: column; align-items: center; padding: 6px 0 5px; }
.thumb { width: 11px; height: 661px; margin: 111px 0 auto; border-radius: 6px; background: #9f9f9f; }

.taskbar { height: 60px; flex: none; display: flex; border-top: 1px solid #454443; background: linear-gradient(90deg, #232320 0%, #28211b 12%, #26221d 20%, #23211f 35%, #24232a 52%, #24232a 72%, #29231e 85%, #23211f 92%, #22262a 100%); color: #fff; }
.weather { width: 347px; padding-left: 24px; position: relative; flex: none; }
.badge { position: absolute; left: 40px; top: 7px; width: 20px; height: 20px; border-radius: 50%; background: #ff99a4; color: #111; font-size: 14px; line-height: 20px; text-align: center; }
.apps { display: flex; gap: 7px; padding-top: 4px; padding-left: 3px; width: 1235px; flex: none; }
.app { width: 48px; height: 50px; border-radius: 6px; display: flex; flex-direction: column; align-items: center; padding-top: 10px; flex: none; }
.app.active { background: #35343a; box-shadow: inset 0 0 0 1px #414045; }
.app-icon { width: 30px; height: 30px; }
.app.run::after { content: ""; width: 8px; height: 4px; border-radius: 2px; background: #97979a; margin-top: 5px; }
.app.active::after { content: ""; width: 20px; height: 4px; border-radius: 2px; background: #4cc2ff; margin-top: 5px; }
.tray { flex: 1; display: flex; align-items: center; font-size: 14.700px; padding-left: 4px; }
.caret { width: 14px; height: 9px; margin-right: 23px; }
.refresh { width: 21px; height: 22px; }
.lang { width: 29px; margin: -1px 22px 0 22px; display: flex; flex-direction: column; align-items: center; line-height: 20px; }
.wifi { width: 21px; height: 17px; margin-right: 9px; }
.volume { width: 21px; height: 18px; margin-right: 9px; }
.battery { width: 21px; height: 19px; margin-top: -4px; }
.clock { margin: -2px 25px 0 auto; display: flex; flex-direction: column; align-items: flex-end; line-height: 20px; }
</style>
